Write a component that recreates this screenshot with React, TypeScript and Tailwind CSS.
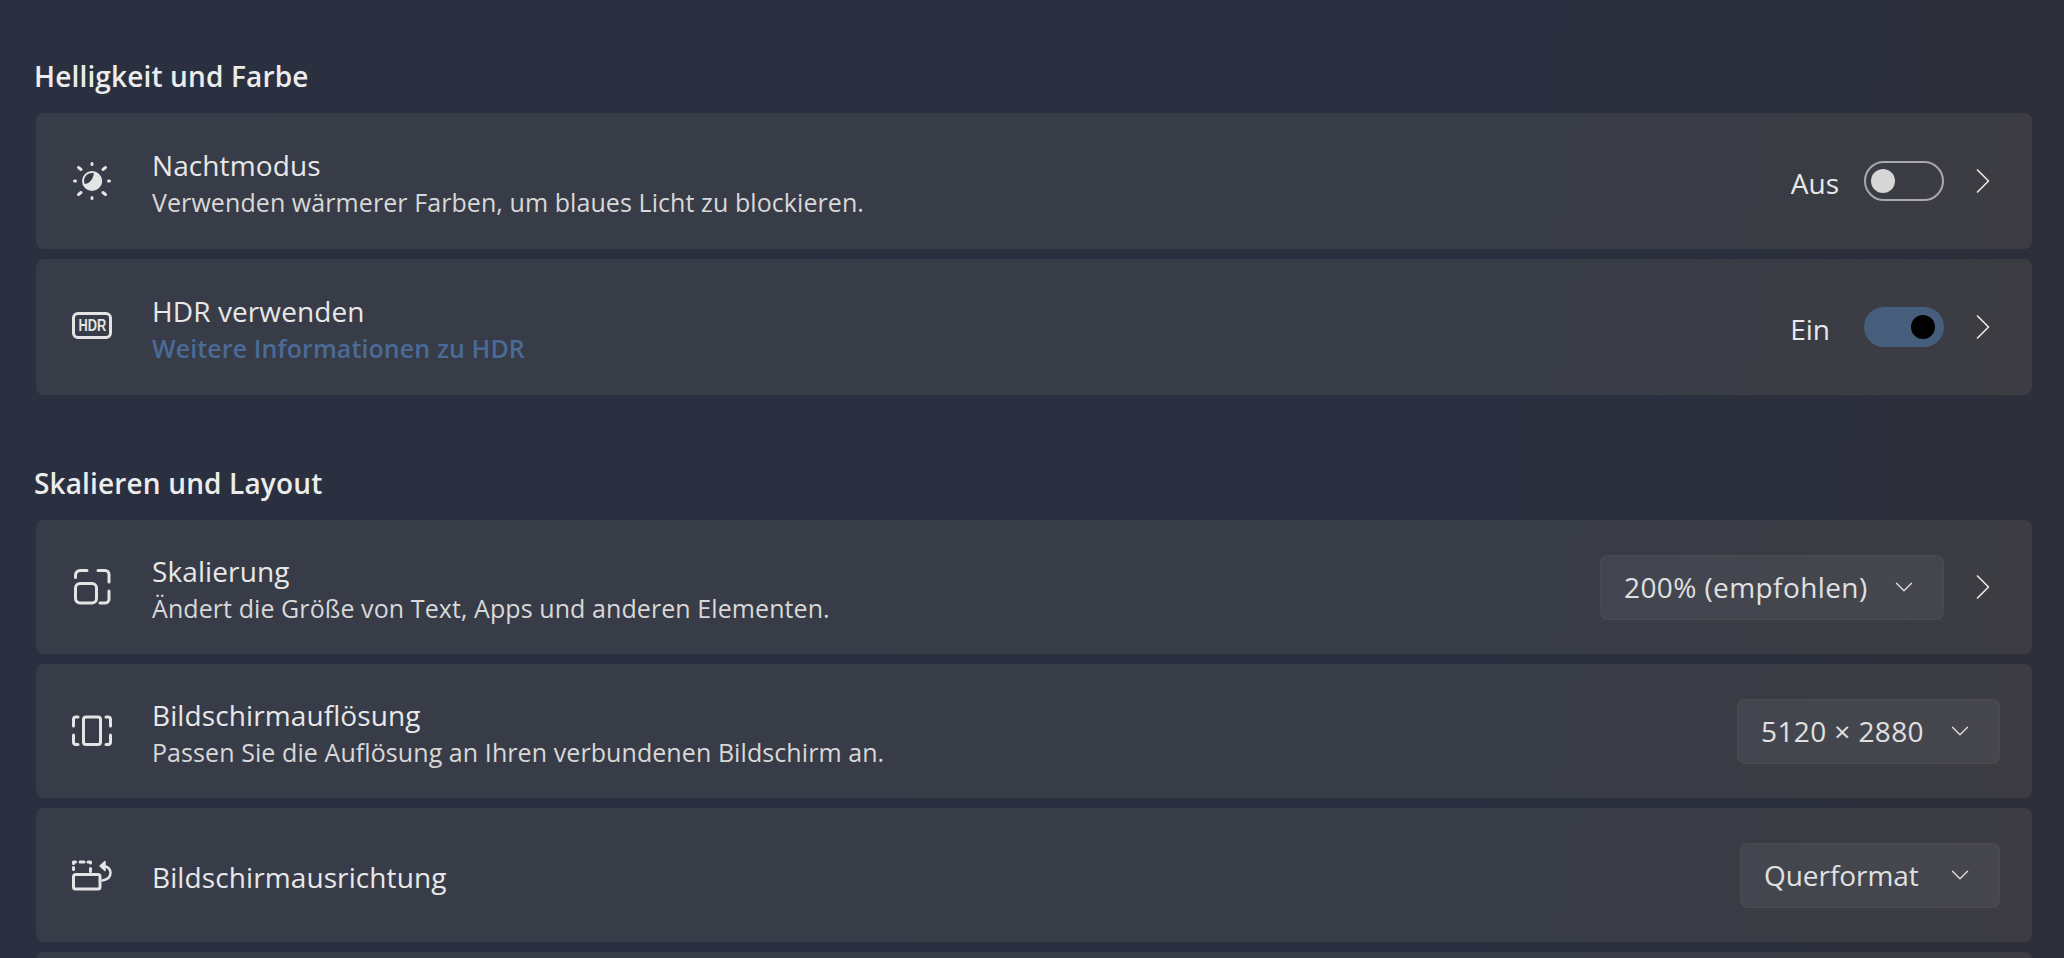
import { ChevronDown, ChevronRight } from "lucide-react";
import type { ReactNode } from "react";

const font = "font-['Open_Sans','Noto_Sans',sans-serif]";

function SunIcon() {
  return (
    <svg width="40" height="40" viewBox="0 0 40 40" fill="none" stroke="#e4e4e4" strokeWidth="3" strokeLinecap="round">
      <circle cx="20" cy="20" r="9" strokeWidth="2" />
      <path d="M22 11a9 9 0 0 1-2 18 9 9 0 0 1-8.500-6c5 .5 10-4 10.500-12z" fill="#e4e4e4" stroke="none" />
      <path d="M20 2.500v1M20 36.500v1M2.500 20h1M36.500 20h1M6.500 6.500l2.500 2M33.500 6.500l-2.500 2M6.500 33.500l2.500-2M33.500 33.500l-2.500-2" />
    </svg>
  );
}

function HdrIcon() {
  return (
    <div className="mb-[3px] flex h-[27px] w-[40px] items-center justify-center rounded-[6px] border-[3px] border-[#e4e4e4]">
      <span className="scale-x-[0.8] font-['Liberation_Sans',sans-serif] text-[16px] font-bold leading-none tracking-[0px] text-[#e4e4e4]">HDR</span>
    </div>
  );
}

function ScaleIcon() {
  return (
    <svg width="40" height="40" viewBox="0 0 40 40" fill="none" stroke="#e4e4e4" strokeWidth="3" strokeLinecap="round" strokeLinejoin="round">
      <rect x="3.500" y="16.500" width="21" height="19.500" rx="4.500" />
      <path d="M3.500 10.500V8a4.500 4.500 0 0 1 4.500-4.500h7M26 3.500h7a4 4 0 0 1 4 4v7.500M37 24v8a4 4 0 0 1-4 4h-5" />
    </svg>
  );
}

function ResolutionIcon() {
  return (
    <svg width="40" height="40" viewBox="0 0 40 40" fill="none" stroke="#e4e4e4" strokeWidth="3" strokeLinecap="round" strokeLinejoin="round">
      <rect x="11.500" y="6" width="17" height="27.500" rx="2.500" />
      <path d="M6 6H4a2.500 2.500 0 0 0-2.500 2.500V15M1.500 24v7a2.500 2.500 0 0 0 2.500 2.500h2M34 6h2a2.500 2.500 0 0 1 2.500 2.500V15M38.500 24v7a2.500 2.500 0 0 1-2.500 2.500h-2" />
    </svg>
  );
}

function RotateIcon() {
  return (
    <svg width="40" height="40" viewBox="0 0 40 40" fill="none" stroke="#e4e4e4" strokeWidth="3" strokeLinecap="round" strokeLinejoin="round">
      <path d="M3.500 19.500h22.500a2 2 0 0 1 2 2V32a2 2 0 0 1-2 2H3.500a2 2 0 0 1-2-2V21.500a2 2 0 0 1 2-2z" />
      <path d="M1.500 14.500v-2M1.500 8.500V7h2M8 7h4M16 7h2.500v1M18.500 13.500v3" />
      <path d="M31 11c4.500.5 7.500 3 7.500 7 0 3.500-3 6.500-8 7.500" strokeWidth="2.500" />
      <path d="M33 6.500l-5 4.500 5 4.500z" fill="#e4e4e4" strokeWidth="1.500" />
    </svg>
  );
}

function Toggle({ on }: { on: boolean }) {
  return on ? (
    <div className="flex h-[40px] w-[80px] items-center justify-end rounded-full bg-[#475d7c] pr-[9px]">
      <div className="h-[24px] w-[24px] rounded-full bg-black" />
    </div>
  ) : (
    <div className="flex h-[40px] w-[80px] items-center rounded-full border-2 border-[#a9a9ac] pl-[5px]">
      <div className="h-[24px] w-[24px] rounded-full bg-[#d6d6d6]" />
    </div>
  );
}

function Dropdown({ label, className }: { label: string; className: string }) {
  return (
    <div className={`flex h-[65px] items-center justify-between rounded-[8px] border border-white/[.03] bg-white/[.055] pl-[23px] pr-[24px] ${className}`}>
      <span className="text-[28px] text-[#e0e0e0]">{label}</span>
      <ChevronDown size={30} strokeWidth={1.200} className="text-[#d8d8d8]" />
    </div>
  );
}

function Arrow() {
  return <ChevronRight size={44} strokeWidth={0.950} className="ml-[17px] mr-[27px] text-[#e4e4e4]" />;
}

function Row({ icon, title, sub, link, tall, children }: { icon?: ReactNode; title?: string; sub?: string; link?: string; tall?: boolean; children?: ReactNode }) {
  return (
    <div className={`flex items-center rounded-[8px] bg-[linear-gradient(100deg,#383c48_0%,#383c47_75%,#3c3c42_100%)] pl-[36px] ${tall ? "h-[136px]" : "h-[134px]"}`}>
      {icon}
      <div className="ml-[40px] flex-1 pt-[3px]">
        {title && <div className="text-[28px] leading-[38px] tracking-[0.1px] text-[#e8e8e8]">{title}</div>}
        {sub && <div className="text-[25px] leading-[36px] tracking-[0.08px] text-[#d8d8d8]">{sub}</div>}
        {link && <div className="text-[25px] font-semibold leading-[36px] tracking-[0.1px] text-[#4a6a98]">{link}</div>}
      </div>
      {children}
    </div>
  );
}

function Heading({ children, className }: { children: ReactNode; className: string }) {
  return <h2 className={`-ml-[2px] text-[28px] font-semibold leading-[38px] tracking-[0.15px] text-[#ececec] ${className}`}>{children}</h2>;
}

export default function App() {
  return (
    <div className={`h-[958px] w-[2064px] overflow-hidden bg-[linear-gradient(95deg,#2a3040_0%,#2a3040_70%,#2d2f39_100%)] pl-[36px] pr-[32px] ${font}`}>
      <Heading className="pt-[57px] mb-[18px]">Helligkeit und Farbe</Heading>
      <div className="flex flex-col gap-[10px]">
        <Row tall icon={<SunIcon />} title="Nachtmodus" sub="Verwenden wärmerer Farben, um blaues Licht zu blockieren.">
          <span className="mr-[25px] pt-[3px] text-[28px] text-[#e8e8e8]">Aus</span>
          <Toggle on={false} />
          <Arrow />
        </Row>
        <Row tall icon={<HdrIcon />} title="HDR verwenden" link="Weitere Informationen zu HDR">
          <span className="mr-[34px] pt-[3px] text-[28px] text-[#e8e8e8]">Ein</span>
          <Toggle on />
          <Arrow />
        </Row>
      </div>
      <Heading className="mt-[69px] mb-[18px]">Skalieren und Layout</Heading>
      <div className="flex flex-col gap-[10px]">
        <Row icon={<ScaleIcon />} title="Skalierung" sub="Ändert die Größe von Text, Apps und anderen Elementen.">
          <Dropdown label="200% (empfohlen)" className="w-[344px] tracking-[0.4px]" />
          <Arrow />
        </Row>
        <Row icon={<ResolutionIcon />} title="Bildschirmauflösung" sub="Passen Sie die Auflösung an Ihren verbundenen Bildschirm an.">
          <Dropdown label="5120 × 2880" className="mr-[32px] w-[263px] tracking-[0.4px]" />
        </Row>
        <Row icon={<RotateIcon />} title="Bildschirmausrichtung">
          <Dropdown label="Querformat" className="mr-[32px] w-[260px] tracking-[-0.05px]" />
        </Row>
        <Row />
      </div>
    </div>
  );
}
